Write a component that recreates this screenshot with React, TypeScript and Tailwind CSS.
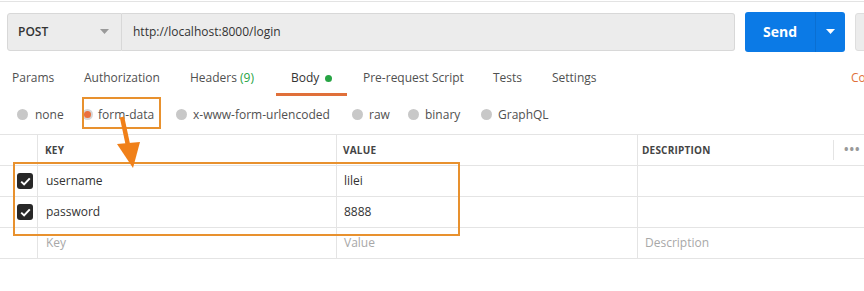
export default function App() {
  const radios = [
    { label: "x-www-form-urlencoded", w: "w-[176px]" },
    { label: "raw", w: "w-[56px]" },
    { label: "binary", w: "w-[73px]" },
    { label: "GraphQL", w: "" },
  ];

  return (
    <div className="relative w-[864px] h-[291px] overflow-hidden bg-white font-['Open_Sans',sans-serif] text-[12px] text-[#505050]">
      <div className="h-[2px] border-b border-[#e3e3e3]" />

      {/* Request bar */}
      <div className="flex items-center pl-[7px] pt-[9px] h-[50px]">
        <div className="shrink-0 flex items-center justify-between w-[115px] h-[38px] bg-[#ececec] border border-[#d8d8d8] rounded-l-[3px] pl-[10px] pr-[12px]">
          <span className="font-semibold text-[12px] text-[#333]">POST</span>
          <svg width="9" height="5" viewBox="0 0 9 5"><path d="M0 0h9L4.5 5z" fill="#9a9a9a" /></svg>
        </div>
        <div className="shrink-0 flex items-center w-[613px] h-[38px] bg-[#ececec] border border-l-0 border-[#d8d8d8] rounded-r-[3px] pl-[11px] text-[#333]">
          http://localhost:8000/login
        </div>
        <div className="shrink-0 ml-[10px] flex w-[100px] h-[40px] rounded-[3px] bg-[#0b7ae6] text-white">
          <div className="flex-1 flex items-center justify-center font-bold text-[14px]">Send</div>
          <div className="w-[30px] flex items-center justify-center border-l border-[#0a6fd2]">
            <svg width="9" height="5" viewBox="0 0 9 5"><path d="M0 0h9L4.5 5z" fill="#ffffff" /></svg>
          </div>
        </div>
        <div className="shrink-0 ml-[10px] w-[20px] h-[38px] bg-[#ececec] border border-[#dedede] rounded-l-[3px]" />
      </div>

      {/* Tabs */}
      <div className="flex items-start h-[43px] pt-[17px] pl-[12px] whitespace-nowrap">
        <div className="shrink-0 w-[72px]">Params</div>
        <div className="shrink-0 w-[106px]">Authorization</div>
        <div className="shrink-0 w-[101px]">
          Headers <span className="text-[#27a444]">(9)</span>
        </div>
        <div className="shrink-0 w-[72px] flex flex-col">
          <div className="flex items-center gap-[6px] text-[#333]">
            Body <span className="w-[7px] h-[7px] rounded-full bg-[#27a444]" />
          </div>
          <div className="mt-[6px] -ml-[15px] w-[71px] h-[3px] bg-[#e0703a]" />
        </div>
        <div className="shrink-0 w-[130px]">Pre-request Script</div>
        <div className="shrink-0 w-[59px]">Tests</div>
        <div className="shrink-0 w-[299px]">Settings</div>
        <div className="shrink-0 text-[#e0703a]">Cookies</div>
      </div>

      {/* Body type radios */}
      <div className="flex items-center h-[39px] pl-[17px] whitespace-nowrap">
        <div className="shrink-0 flex items-center gap-[7px] w-[65px]">
          <span className="w-[11px] h-[11px] rounded-full bg-[#c8c8c8]" />none
        </div>
        <div className="shrink-0 flex items-center gap-[5px] w-[94px]">
          <span className="w-[11px] h-[11px] rounded-full bg-[#d6d6d6] flex items-center justify-center">
            <span className="w-[7px] h-[7px] rounded-full bg-[#ea6f3d]" />
          </span>
          form-data
        </div>
        {radios.map((r) => (
          <div key={r.label} className={"shrink-0 flex items-center gap-[6px] " + r.w}>
            <span className="w-[11px] h-[11px] rounded-full bg-[#c8c8c8]" />
            {r.label}
          </div>
        ))}
      </div>

      {/* Table */}
      <div className="border-t border-[#e4e4e4]">
        <div className="flex h-[31px] border-b border-[#e4e4e4] text-[10px] font-bold text-[#444] tracking-[0.2px]">
          <div className="w-[37px]" />
          <div className="w-[299px] flex items-center pl-[7px] border-l border-[#e4e4e4]">KEY</div>
          <div className="w-[301px] flex items-center pl-[6px] border-l border-[#e4e4e4]">VALUE</div>
          <div className="w-[196px] flex items-center pl-[4px] border-l border-[#e4e4e4]">DESCRIPTION</div>
          <div className="flex-1 flex items-center pl-[10px] my-[5px] border-l border-[#e4e4e4] text-[#999] text-[12px] tracking-[1px]">•••</div>
        </div>
        {[
          ["username", "lilei"],
          ["password", "8888"],
        ].map(([k, v]) => (
          <div key={k} className="flex h-[31px] border-b border-[#e4e4e4] text-[#333]">
            <div className="w-[37px] flex items-center pl-[17px]">
              <span className="w-[16px] h-[16px] rounded-[3px] bg-[#282828] flex items-center justify-center">
                <svg width="11" height="9" viewBox="0 0 11 9">
                  <path d="M1.2 4.6l2.9 2.8L9.8 1.4" fill="none" stroke="#fff" strokeWidth="2" />
                </svg>
              </span>
            </div>
            <div className="w-[299px] flex items-center pl-[8px] border-l border-[#e4e4e4]">{k}</div>
            <div className="w-[301px] flex items-center pl-[7px] border-l border-[#e4e4e4]">{v}</div>
            <div className="flex-1 border-l border-[#e4e4e4]" />
          </div>
        ))}
        <div className="flex h-[31px] border-b border-[#e4e4e4] text-[#a8a8a8]">
          <div className="w-[37px]" />
          <div className="w-[299px] flex items-center pl-[8px] border-l border-[#e4e4e4]">Key</div>
          <div className="w-[301px] flex items-center pl-[7px] border-l border-[#e4e4e4]">Value</div>
          <div className="flex-1 flex items-center pl-[7px] border-l border-[#e4e4e4]">Description</div>
        </div>
      </div>

      {/* Annotations */}
      <div className="absolute left-[82px] top-[97px] w-[79px] h-[32px] border-2 border-[#e8912e]" />
      <div className="absolute left-[13px] top-[162px] w-[447px] h-[74px] border-2 border-[#e8912e]" />
      <svg className="absolute left-[108px] top-[112px]" width="40" height="60" viewBox="0 0 40 60">
        <path d="M14 5L21 38" stroke="#f08019" strokeWidth="4.5" />
        <path d="M9 32L32 30L25 56Z" fill="#f08019" />
      </svg>
    </div>
  );
}
